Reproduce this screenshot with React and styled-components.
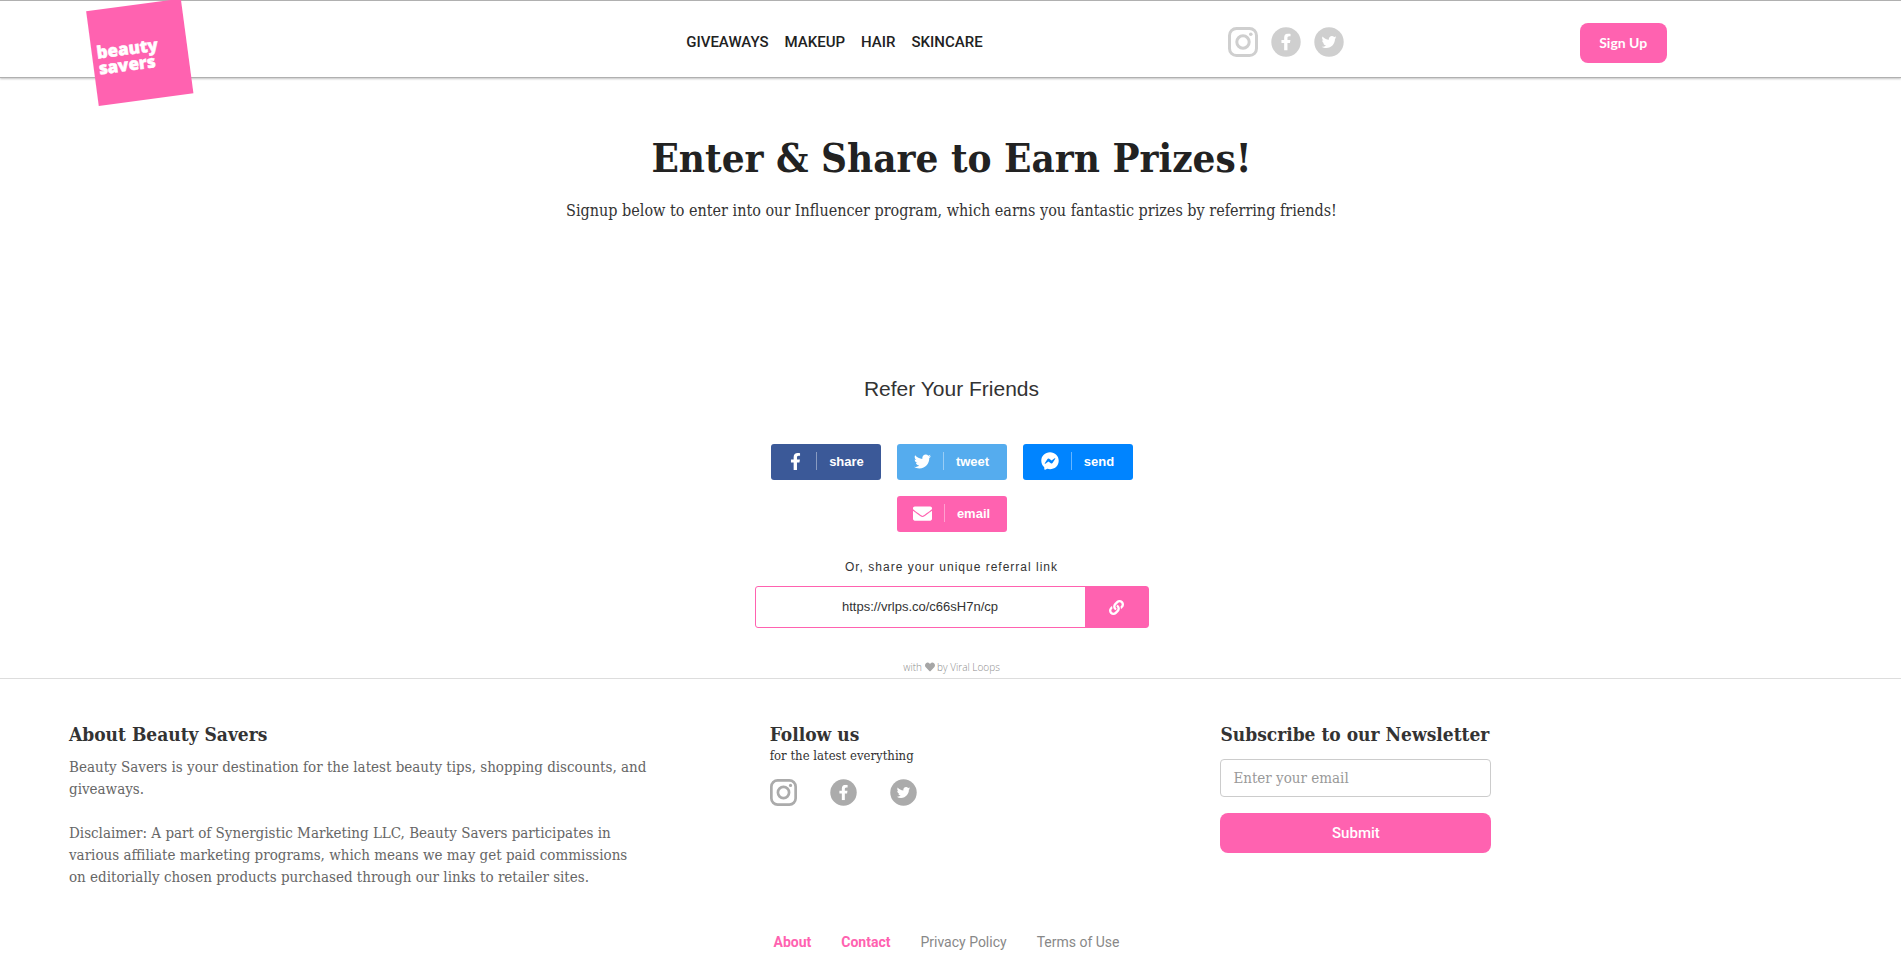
import { useState } from "react";
import styled, { createGlobalStyle } from "styled-components";
import { FaFacebookF, FaTwitter, FaFacebookMessenger, FaEnvelope, FaLink, FaHeart } from "react-icons/fa";

const serif = `"DejaVu Serif Condensed", "DejaVu Serif", serif`;
const sans = `"Liberation Sans", Arial, sans-serif`;
const grotesque = `Roboto, "Liberation Sans", sans-serif`;
const pink = "#ff62b0";

const menu = ["Giveaways", "Makeup", "Hair", "Skincare"];

const shares = [
    { label: "share", icon: FaFacebookF, color: "#3b5998", size: 17 },
    { label: "tweet", icon: FaTwitter, color: "#55acee", size: 17 },
    { label: "send", icon: FaFacebookMessenger, color: "#0084ff", size: 18 },
    { label: "email", icon: FaEnvelope, color: pink, size: 19 },
];

const InstagramMark = ({ size }) => (
    <svg width={size} height={size} viewBox="0 0 30 30" fill="none" stroke="currentColor" aria-hidden="true">
        <rect x="1.5" y="1.5" width="27" height="27" rx="7" strokeWidth="3" />
        <circle cx="15" cy="15" r="6.2" strokeWidth="3" />
        <circle cx="22.8" cy="7.2" r="1.8" fill="currentColor" stroke="none" />
    </svg>
);

const FacebookMark = ({ size }) => (
    <svg width={size} height={size} viewBox="0 0 30 30" aria-hidden="true">
        <circle cx="15" cy="15" r="14.7" fill="currentColor" />
        <FaFacebookF x="6.5" y="6.5" size="17" color="#ffffff" />
    </svg>
);

const TwitterMark = ({ size }) => (
    <svg width={size} height={size} viewBox="0 0 30 30" aria-hidden="true">
        <circle cx="15" cy="15" r="14.7" fill="currentColor" />
        <FaTwitter x="7.5" y="7.5" size="15" color="#ffffff" />
    </svg>
);

const SocialLinks = ({ size, gap, color }) => (
    <SocialList $gap={gap} $color={color}>
        <a href="#instagram" aria-label="Instagram"><InstagramMark size={size} /></a>
        <a href="#facebook" aria-label="Facebook"><FacebookMark size={size} /></a>
        <a href="#twitter" aria-label="Twitter"><TwitterMark size={size} /></a>
    </SocialList>
);

const Logo = () => (
    <LogoLink href="#home" aria-label="Beauty Savers">
        <svg width="110" height="106" viewBox="85 0 110 106" aria-hidden="true">
            <g transform="rotate(-7.6 140 52)">
                <rect x="92" y="4.5" width="95.5" height="95.5" fill={pink} />
                <g fill="#ffffff" fontFamily="Open Sans" fontWeight="800" fontSize="17" stroke="#ffffff" strokeWidth="0.5">
                    <text x="97" y="53">beauty</text>
                    <text x="97" y="69">savers</text>
                </g>
            </g>
        </svg>
    </LogoLink>
);

const App = () => {
    const [email, setEmail] = useState("");
    const referralLink = "https://vrlps.co/c66sH7n/cp";

    const copyLink = () => {
        navigator.clipboard?.writeText(referralLink);
    };

    return (
        <>
            <GlobalStyle />
            <Header>
                <Logo />
                <Menu>
                    {menu.map((item) => (
                        <MenuLink key={item} href={"#" + item.toLowerCase()}>{item}</MenuLink>
                    ))}
                </Menu>
                <SocialLinks size={30} gap={13} color="#cfcfcf" />
                <SignUpButton type="button">Sign Up</SignUpButton>
            </Header>

            <Main>
                <Title>Enter &amp; Share to Earn Prizes!</Title>
                <Lead>Signup below to enter into our Influencer program, which earns you fantastic prizes by referring friends!</Lead>

                <ReferTitle>Refer Your Friends</ReferTitle>
                <ShareList>
                    {shares.map(({ label, icon: Icon, color, size }) => (
                        <ShareButton key={label} type="button" $color={color}>
                            <Icon size={size} />
                            <Divider />
                            {label}
                        </ShareButton>
                    ))}
                </ShareList>
                <LinkLabel htmlFor="referral">Or, share your unique referral link</LinkLabel>
                <LinkBox>
                    <LinkInput id="referral" type="text" value={referralLink} readOnly />
                    <CopyButton type="button" aria-label="Copy link" onClick={copyLink}>
                        <FaLink size={15} />
                    </CopyButton>
                </LinkBox>
                <Credit>with <FaHeart size={10} /> by Viral Loops</Credit>
            </Main>

            <Footer>
                <FooterColumns>
                    <div>
                        <FooterTitle>About Beauty Savers</FooterTitle>
                        <About>
                            Beauty Savers is your destination for the latest beauty tips, shopping discounts, and giveaways.
                        </About>
                        <About>
                            Disclaimer: A part of Synergistic Marketing LLC, Beauty Savers participates in
                            various affiliate marketing programs, which means we may get paid commissions
                            <br />
                            on editorially chosen products purchased through our links to retailer sites.
                        </About>
                    </div>
                    <div>
                        <FooterTitle>Follow us</FooterTitle>
                        <FollowText>for the latest everything</FollowText>
                        <SocialLinks size={27} gap={33} color="#ababab" />
                    </div>
                    <Newsletter onSubmit={(e) => e.preventDefault()}>
                        <FooterTitle as="label" htmlFor="email">Subscribe to our Newsletter</FooterTitle>
                        <EmailInput
                            id="email"
                            type="email"
                            placeholder="Enter your email"
                            value={email}
                            onChange={(e) => setEmail(e.target.value)}
                        />
                        <SubmitButton type="submit">Submit</SubmitButton>
                    </Newsletter>
                </FooterColumns>
                <FooterLinks>
                    <FooterLink href="#about" $strong>About</FooterLink>
                    <FooterLink href="#contact" $strong>Contact</FooterLink>
                    <FooterLink href="#privacy">Privacy Policy</FooterLink>
                    <FooterLink href="#terms">Terms of Use</FooterLink>
                </FooterLinks>
            </Footer>
        </>
    );
};

export default App;

const GlobalStyle = createGlobalStyle`
    *, *::before, *::after {
        box-sizing: border-box;
    }
    body {
        margin: 0;
        background: #ffffff;
        color: #333333;
        font-family: ${serif};
    }
    button, input {
        font: inherit;
        margin: 0;
    }
`;
const Header = styled.header`
    display: grid;
    grid-template-columns: 361fr 285fr 185fr 169fr;
    height: 77px;
    border-top: 1px solid #b0b0b0;
    box-shadow: 0 1px 0 #b0b0b0, 0 2px 2px #c4c4c4;
`;
const LogoLink = styled.a`
    height: 76px;
    margin-top: -1px;
    padding-left: 85px;
    svg {
        display: block;
    }
`;
const Menu = styled.nav`
    display: flex;
    align-items: center;
    gap: 16px;
    padding-top: 6px;
`;
const MenuLink = styled.a`
    color: #222222;
    font-family: ${grotesque};
    font-size: 15px;
    font-weight: 500;
    line-height: 20px;
    text-decoration: none;
    text-transform: uppercase;
`;
const SocialList = styled.div`
    display: flex;
    align-items: center;
    gap: ${({ $gap }) => $gap}px;
    color: ${({ $color }) => $color};
    ${Header} & {
        padding-top: 6px;
    }
    a {
        color: inherit;
    }
    svg {
        display: block;
    }
`;
const SignUpButton = styled.button`
    width: 87px;
    height: 40px;
    margin-top: 22px;
    padding: 0 0 2px;
    border: none;
    border-radius: 8px;
    background-color: ${pink};
    color: #ffffff;
    font-family: Lato, sans-serif;
    font-size: 14px;
    font-weight: 700;
    cursor: pointer;
`;
const Main = styled.main`
    display: flex;
    flex-direction: column;
    align-items: center;
    padding: 54px 20px 0 22px;
    text-align: center;
`;
const Title = styled.h1`
    margin: 0;
    color: #222222;
    font-size: 40px;
    font-weight: 700;
    line-height: 54px;
`;
const Lead = styled.p`
    margin: 14px 0 0;
    font-size: 16px;
    line-height: 24px;
`;
const ReferTitle = styled.h2`
    margin: 154px 0 0;
    font-family: ${sans};
    font-size: 21px;
    font-weight: 400;
    line-height: 24px;
`;
const ShareList = styled.div`
    display: flex;
    flex-wrap: wrap;
    justify-content: center;
    gap: 16px;
    max-width: 394px;
    margin-top: 43px;
`;
const ShareButton = styled.button`
    display: flex;
    align-items: center;
    justify-content: center;
    gap: 12px;
    width: 110px;
    height: 36px;
    padding: 0 0 2px;
    border: none;
    border-radius: 3px;
    background-color: ${({ $color }) => $color};
    color: #ffffff;
    font-family: ${sans};
    font-size: 13px;
    font-weight: 700;
    cursor: pointer;
    svg {
        width: auto;
    }
`;
const Divider = styled.span`
    width: 1px;
    height: 18px;
    background-color: rgba(255, 255, 255, 0.4);
`;
const LinkLabel = styled.label`
    margin-top: 26px;
    font-family: ${sans};
    font-size: 12px;
    letter-spacing: 1px;
    line-height: 18px;
`;
const LinkBox = styled.div`
    display: flex;
    width: 394px;
    max-width: 100%;
    height: 42px;
    margin-top: 10px;
    border: 1px solid ${pink};
    border-radius: 3px;
`;
const LinkInput = styled.input`
    flex: 1;
    min-width: 0;
    padding: 0 0 2px;
    border: none;
    outline: none;
    background: none;
    color: #333333;
    font-family: ${sans};
    font-size: 13px;
    text-align: center;
`;
const CopyButton = styled.button`
    display: flex;
    align-items: center;
    justify-content: center;
    width: 63px;
    padding: 0;
    border: none;
    background-color: ${pink};
    color: #ffffff;
    cursor: pointer;
`;
const Credit = styled.p`
    margin: 31px 0 0;
    color: #8c8c8c;
    font-family: "Open Sans", sans-serif;
    font-size: 10px;
    font-weight: 300;
    line-height: 16px;
    svg {
        color: #a6a6a6;
        vertical-align: -1px;
    }
`;
const Footer = styled.footer`
    margin-top: 3px;
    padding: 44px 0 16px 69px;
    border-top: 1px solid #dddddd;
`;
const FooterColumns = styled.div`
    display: grid;
    grid-template-columns: 765fr 492fr 743fr;
    min-height: 208px;
`;
const FooterTitle = styled.h3`
    display: block;
    margin: 0;
    color: #333333;
    font-size: 19px;
    font-weight: 700;
    line-height: 22px;
    white-space: nowrap;
`;
const About = styled.p`
    max-width: 582px;
    margin: 11px 0 22px;
    color: #666666;
    font-size: 15px;
    line-height: 22px;
    & + & {
        margin: 0;
    }
`;
const FollowText = styled.p`
    margin: 2px 0 14px;
    font-size: 13px;
    line-height: 18px;
`;
const Newsletter = styled.form`
    width: 271px;
`;
const EmailInput = styled.input`
    display: block;
    width: 100%;
    height: 38px;
    margin-top: 14px;
    padding: 0 12px;
    border: 1px solid #cccccc;
    border-radius: 4px;
    color: #333333;
    font-size: 15px;
    &::placeholder {
        color: #999999;
    }
`;
const SubmitButton = styled.button`
    display: block;
    width: 100%;
    height: 40px;
    margin-top: 16px;
    border: none;
    border-radius: 8px;
    background-color: ${pink};
    color: #ffffff;
    font-family: ${grotesque};
    font-size: 15px;
    font-weight: 500;
    cursor: pointer;
`;
const FooterLinks = styled.nav`
    display: flex;
    justify-content: center;
    gap: 30px;
    padding-right: 77px;
`;
const FooterLink = styled.a`
    color: ${({ $strong }) => ($strong ? pink : "#888888")};
    font-family: ${grotesque};
    font-size: 14px;
    font-weight: ${({ $strong }) => ($strong ? 700 : 400)};
    line-height: 22px;
    text-decoration: none;
`;
